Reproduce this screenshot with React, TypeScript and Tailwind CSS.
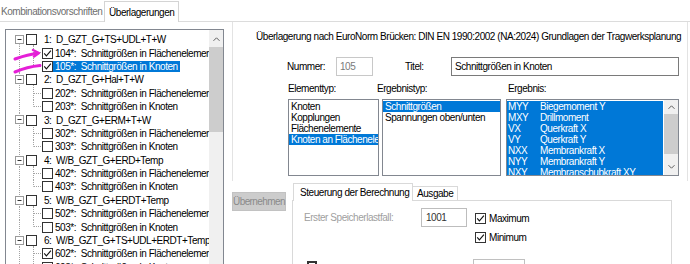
import React from "react";

const FONT = "font-['Liberation_Sans',Arial,sans-serif] text-[10px] tracking-[-0.45px]";

function CheckBox({ checked = false }: { checked?: boolean }) {
  return (
    <div className="w-[11px] h-[11px] shrink-0 border border-[#333333] bg-white flex items-center justify-center">
      {checked && (
        <svg width="9" height="9" viewBox="0 0 9 9">
          <path d="M1.2 4.4 L3.4 6.9 L7.9 1.6" fill="none" stroke="#111" strokeWidth="1.1" />
        </svg>
      )}
    </div>
  );
}

type TRow = {
  kind: "p" | "c";
  text: string;
  checked?: boolean;
  selected?: boolean;
  first?: boolean;
  lastChild?: boolean;
};

const rows: TRow[] = [
  { kind: "p", text: "1:  D_GZT_G+TS+UDL+T+W", first: true },
  { kind: "c", text: "104*:  Schnittgrößen in Flächenelemente", checked: true },
  { kind: "c", text: "105*:  Schnittgrößen in Knoten", checked: true, selected: true, lastChild: true },
  { kind: "p", text: "2:  D_GZT_G+Hal+T+W" },
  { kind: "c", text: "202*:  Schnittgrößen in Flächenelemente" },
  { kind: "c", text: "203*:  Schnittgrößen in Knoten", lastChild: true },
  { kind: "p", text: "3:  D_GZT_G+ERM+T+W" },
  { kind: "c", text: "302*:  Schnittgrößen in Flächenelemente" },
  { kind: "c", text: "303*:  Schnittgrößen in Knoten", lastChild: true },
  { kind: "p", text: "4:  W/B_GZT_G+ERD+Temp" },
  { kind: "c", text: "402*:  Schnittgrößen in Flächenelemente" },
  { kind: "c", text: "403*:  Schnittgrößen in Knoten", lastChild: true },
  { kind: "p", text: "5:  W/B_GZT_G+ERDT+Temp" },
  { kind: "c", text: "502*:  Schnittgrößen in Flächenelemente" },
  { kind: "c", text: "503*:  Schnittgrößen in Knoten", lastChild: true },
  { kind: "p", text: "6:  W/B_GZT_G+TS+UDL+ERDT+Temp" },
  { kind: "c", text: "602*:  Schnittgrößen in Flächenelemente", checked: true },
  { kind: "c", text: "603*:  Schnittgrößen in Knoten", lastChild: true },
];

function TreeLines({ row }: { row: TRow }) {
  const c = 6.7;
  const dot = { stroke: "#a3a3a3", strokeWidth: 1, strokeDasharray: "1 1" };
  return (
    <svg className="absolute left-0 top-0 pointer-events-none" width="50" height="14" viewBox="0 0 50 14">
      {row.kind === "p" ? (
        <>
          <line x1="13.5" y1={row.first ? c : 0} x2="13.5" y2="14" {...dot} />
          <line x1="27.5" y1="12" x2="27.5" y2="14" {...dot} />
          <rect x="9.5" y="2.5" width="8" height="8" fill="#fff" stroke="#9a9a9a" />
          <line x1="11.5" y1="6.5" x2="15.5" y2="6.5" stroke="#333" strokeWidth="1" />
        </>
      ) : (
        <>
          <line x1="13.5" y1="0" x2="13.5" y2="14" {...dot} />
          <line x1="27.5" y1="0" x2="27.5" y2={row.lastChild ? c : 14} {...dot} />
          <line x1="28" y1="6.5" x2="36" y2="6.5" {...dot} />
        </>
      )}
    </svg>
  );
}

function TreeRow({ row }: { row: TRow }) {
  return (
    <div className="relative h-[13.4px] flex items-center whitespace-pre">
      <TreeLines row={row} />
      {row.kind === "p" ? (
        <div className="relative flex items-center pl-[20px]">
          <CheckBox checked={row.checked} />
          <span className="ml-[7px] leading-[11px]">{row.text}</span>
        </div>
      ) : (
        <div className="relative flex items-center pl-[36px]">
          <CheckBox checked={row.checked} />
          <span
            className={
              "px-[2px] h-[11px] leading-[11px] " + (row.selected ? "bg-[#0078d7] text-white" : "")
            }
          >
            {row.text}
          </span>
        </div>
      )}
    </div>
  );
}

function Chevron({ up = true }: { up?: boolean }) {
  return (
    <svg width="7" height="4" viewBox="0 0 7 4">
      <path d={up ? "M0.5 3.8 L3.5 0.8 L6.5 3.8" : "M0.5 0.2 L3.5 3.2 L6.5 0.2"} fill="none" stroke="#606060" strokeWidth="1" />
    </svg>
  );
}

const elementTypes = ["Knoten", "Kopplungen", "Flächenelemente", "Knoten an Flächenelementen"];
const ergebnisTypes = ["Schnittgrößen", "Spannungen oben/unten"];
const results: [string, string][] = [
  ["MYY", "Biegemoment Y"],
  ["MXY", "Drillmoment"],
  ["VX", "Querkraft X"],
  ["VY", "Querkraft Y"],
  ["NXX", "Membrankraft X"],
  ["NYY", "Membrankraft Y"],
  ["NXY", "Membranschubkraft XY"],
];

export default function App() {
  return (
    <div className={"relative w-[690px] h-[264px] overflow-hidden bg-white text-black " + FONT}>
      {/* outer tab strip */}
      <div className="h-[22px] flex items-end border-b border-[#dcdcdc]">
        <div className="w-[104px] h-[19px] pl-[1px] flex items-center text-[#6e6e6e] whitespace-nowrap">
          Kombinationsvorschriften
        </div>
        <div className="relative w-[75px] h-[21px] mb-[-1px] bg-white border-l border-t border-r border-[#d4d4d4] pl-[4px] flex items-center whitespace-nowrap">
          Überlagerungen
        </div>
      </div>

      <div className="flex">
        {/* left tree */}
        <div className="w-[232px] pl-[5px] pt-[7px]">
          <div className="w-[219px] h-[300px] border border-[#828790] flex">
            <div className="w-[203px] overflow-hidden pt-[3px]">
              {rows.map((r, i) => (
                <TreeRow key={i} row={r} />
              ))}
            </div>
            <div className="w-[14px] bg-[#f0f0f0] flex flex-col">
              <div className="h-[17px] flex items-center justify-center">
                <Chevron />
              </div>
              <div className="h-[85px] bg-[#cdcdcd]" />
            </div>
          </div>
        </div>

        {/* right side */}
        <div className="w-[456px] flex flex-col">
          <div className="h-[159px] border-l border-r border-[#e3e3e3] flex flex-col">
            <div className="pl-[23px] pt-[9px] h-[21px] leading-[12px] whitespace-nowrap">
              Überlagerung nach EuroNorm Brücken: DIN EN 1990:2002 (NA:2024) Grundlagen der Tragwerksplanung
            </div>
            <div className="mt-[14px] h-[19px] flex items-center">
              <span className="ml-[54px] w-[49px]">Nummer:</span>
              <div className="w-[37px] h-[19px] border border-[#c8c8c8] pl-[3px] flex items-center text-[#7a7a7a]">
                105
              </div>
              <span className="ml-[32px] w-[46px]">Titel:</span>
              <div className="w-[228px] h-[19px] border border-[#7a7a7a] pl-[3px] flex items-center">
                Schnittgrößen in Knoten
              </div>
            </div>
            <div className="mt-[7px] h-[12px] leading-[12px] flex">
              <span className="ml-[55px] w-[89px]">Elementtyp:</span>
              <span className="w-[131px]">Ergebnistyp:</span>
              <span>Ergebnis:</span>
            </div>
            <div className="mt-[4px] h-[77px] flex">
              <div className="ml-[55px] w-[91px] h-[77px] border border-[#828790] pt-[1px] overflow-hidden whitespace-nowrap">
                {elementTypes.map((t, i) => (
                  <div
                    key={t}
                    className={"h-[11px] leading-[11px] px-[2px] " + (i === 3 ? "bg-[#0078d7] text-white" : "")}
                  >
                    {t}
                  </div>
                ))}
              </div>
              <div className="ml-[3px] w-[119px] h-[77px] border border-[#828790] pt-[1px] overflow-hidden whitespace-nowrap">
                {ergebnisTypes.map((t, i) => (
                  <div
                    key={t}
                    className={"h-[11px] leading-[11px] px-[2px] " + (i === 0 ? "bg-[#0078d7] text-white" : "")}
                  >
                    {t}
                  </div>
                ))}
              </div>
              <div className="ml-[5px] w-[173px] h-[77px] border border-[#828790] flex overflow-hidden">
                <div className="w-[156px] pt-[1px] whitespace-nowrap">
                  {results.map(([c, n]) => (
                    <div key={c} className="h-[11px] leading-[11px] bg-[#0078d7] text-white flex">
                      <span className="w-[33px] pl-[1px]">{c}</span>
                      <span>{n}</span>
                    </div>
                  ))}
                </div>
                <div className="ml-[1px] w-[14px] bg-[#f0f0f0] flex flex-col">
                  <div className="h-[14px] flex items-center justify-center">
                    <Chevron />
                  </div>
                  <div className="h-[40px] bg-[#cdcdcd]" />
                  <div className="flex-1 flex items-end justify-center pb-[6px]">
                    <Chevron up={false} />
                  </div>
                </div>
              </div>
            </div>
          </div>

          {/* lower area */}
          <div className="flex items-start">
            <div className="mt-[11px] w-[54px] h-[19px] bg-[#cccccc] border border-[#c2c2c2] flex items-center justify-center text-[#8a8a8a] whitespace-nowrap tracking-[-0.6px]">
              Übernehmen
            </div>
            <div className="ml-[6px] mt-[2px] w-[380px] flex flex-col">
              <div className="h-[17px] flex items-end">
                <div className="relative ml-[1px] w-[120px] h-[18px] mb-[-1px] bg-white border-l border-t border-r border-[#d9d9d9] pl-[6px] flex items-center whitespace-nowrap">
                  Steuerung der Berechnung
                </div>
                <div className="w-[45px] h-[14px] bg-white border-t border-r border-[#d9d9d9] pl-[4px] flex items-center whitespace-nowrap">
                  Ausgabe
                </div>
              </div>
              <div className="h-[100px] border border-[#d9d9d9] bg-white flex">
                <div className="pl-[11px] flex flex-col">
                  <div className="mt-[7px] h-[19px] flex items-center">
                    <span className="w-[117px] text-[#a0a0a0] whitespace-nowrap">Erster Speicherlastfall:</span>
                    <div className="w-[46px] h-[19px] border border-[#bdbdbd] pl-[4px] flex items-center text-[#333]">
                      1001
                    </div>
                  </div>
                  <div className="mt-[34px] ml-[3px] w-[10px] h-[10px] border-2 border-[#333] bg-white" />
                </div>
                <div className="ml-[8px] flex flex-col">
                  <div className="mt-[12px] h-[11px] flex items-center">
                    <CheckBox checked />
                    <span className="ml-[3px] leading-[11px]">Maximum</span>
                  </div>
                  <div className="mt-[8px] h-[11px] flex items-center">
                    <CheckBox checked />
                    <span className="ml-[3px] leading-[11px]">Minimum</span>
                  </div>
                  <div className="mt-[16px] ml-[-2px] w-[52px] h-[20px] border border-[#c0c0c0] bg-white" />
                </div>
              </div>
            </div>
          </div>
        </div>
      </div>

      {/* magenta annotation arrows */}
      <svg className="absolute left-0 top-0 pointer-events-none" width="60" height="90" viewBox="0 0 60 90">
        <g fill="none" stroke="#e51fd7" strokeWidth="3" strokeLinecap="round" strokeLinejoin="round">
          <path d="M15 59 C21 57 28 54.5 36 53.5" />
          <path d="M33 50 L39 53 L34 56.5" strokeWidth="2.5" />
          <path d="M15 72 C22 69 30 66.5 40 65.5" />
        </g>
      </svg>
    </div>
  );
}
